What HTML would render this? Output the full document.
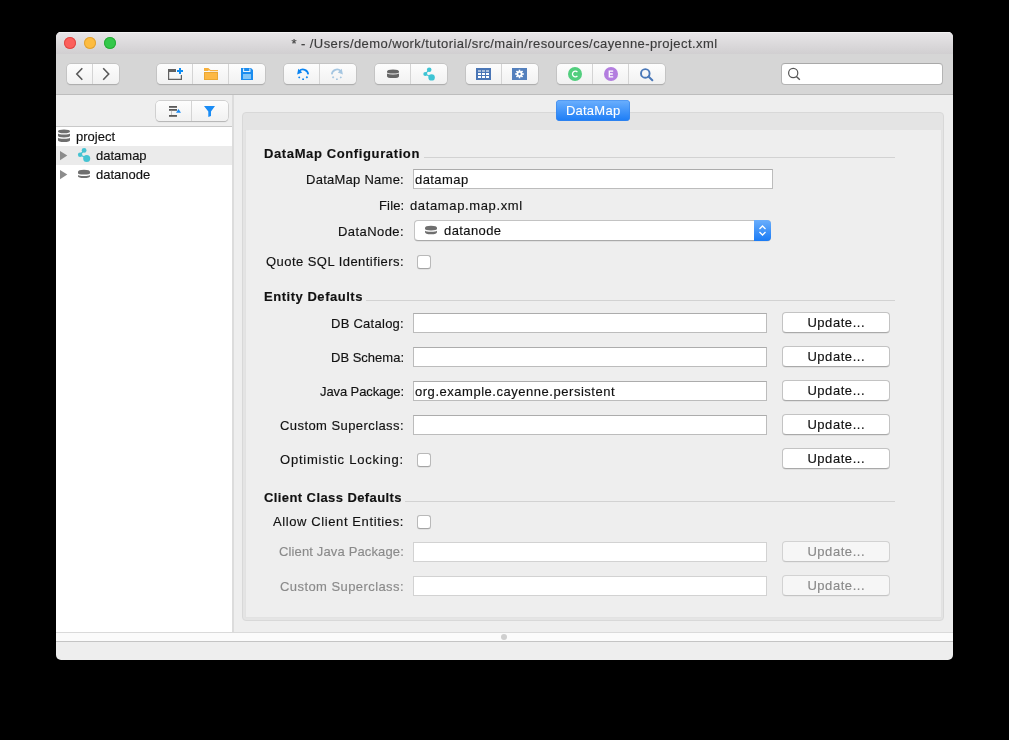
<!DOCTYPE html>
<html><head><meta charset="utf-8">
<style>
*{box-sizing:border-box;margin:0;padding:0}
.lbl,.btn,#title .t{will-change:transform}
html,body{width:1009px;height:740px;background:#000;overflow:hidden;font-family:"Liberation Sans",sans-serif;font-size:13px;color:#222}
.a{position:absolute}
#win{position:absolute;left:56px;top:32px;width:897px;height:628px;background:#eeeeee;border-radius:5px;overflow:hidden}
#title{position:absolute;left:0;top:0;width:897px;height:22px;background:linear-gradient(#e8e6e8,#d1cfd1);box-shadow:inset 0 1px 0 #f2f1f2}
#title .t{position:absolute;left:0;top:4px;width:897px;text-align:center;color:#3c3c3c;-webkit-text-stroke:0.15px #3c3c3c;font-size:13px;letter-spacing:0.42px;line-height:15px}
.light{position:absolute;top:5px;width:12px;height:12px;border-radius:50%}
#tb{position:absolute;left:0;top:22px;width:897px;height:41px;background:#d6d6d6;border-bottom:1px solid #bdbdbd}
.grp{position:absolute;top:10px;height:20px;border-radius:4px;background:linear-gradient(#fdfdfd,#f1f1f1);box-shadow:0 0 0 0.5px #b8b8b8,0 0.5px 1px rgba(0,0,0,0.25)}
.sep{position:absolute;top:0;width:1px;height:20px;background:#d4d4d4}
.ic{position:absolute}
.lbl{position:absolute;line-height:15px;white-space:nowrap;color:#111;-webkit-text-stroke:0.15px #111}
.r{text-align:right}
.b{font-weight:bold}
.fld{position:absolute;background:#fff;border:1px solid #bcbcbc;border-top-color:#acacac}
.fld.dis{border-color:#d2d2d2}
.btn{position:absolute;width:108px;height:21px;border-radius:4px;background:#fff;border:1px solid #c3c3c3;border-bottom-color:#a9a9a9;box-shadow:0 0.5px 0.5px rgba(0,0,0,0.12);text-align:center;line-height:20px;color:#111;-webkit-text-stroke:0.15px #111;letter-spacing:0.55px;text-indent:0.55px}
.btn.dis{background:#f6f6f6;color:#8a8a8a;-webkit-text-stroke:0.15px #8a8a8a;border-color:#d2d2d2;border-bottom-color:#c4c4c4;box-shadow:0 0.5px 0.5px rgba(0,0,0,0.06)}
.chk{position:absolute;width:14px;height:14px;border-radius:3px;background:#fff;border:1px solid #b9b9b9;border-bottom-color:#a5a5a5;box-shadow:0 0.5px 0.5px rgba(0,0,0,0.12)}
.hsep{position:absolute;height:1px;background:#d2d2d2}
.lbl.dis-l{color:#8a8a8a;-webkit-text-stroke:0.15px #8a8a8a}
</style></head><body>
<div id="win">
  <div id="title">
    <div class="light" style="left:8px;background:#fc605c;box-shadow:inset 0 0 0 1px #e04a46"></div>
    <div class="light" style="left:28px;background:#fdbc40;box-shadow:inset 0 0 0 1px #e0a236"></div>
    <div class="light" style="left:48px;background:#34c84a;box-shadow:inset 0 0 0 1px #2aac38"></div>
    <div class="t">* - /Users/demo/work/tutorial/src/main/resources/cayenne-project.xml</div>
  </div>
  <div id="tb">
    <!-- back/forward -->
    <div class="grp" style="left:11px;width:52px">
      <div class="sep" style="left:25px"></div>
      <svg class="ic" style="left:8px;top:3px" width="10" height="14"><path d="M7.3 1.2 L1.8 7 L7.3 12.8" fill="none" stroke="#595959" stroke-width="1.6"/></svg>
      <svg class="ic" style="left:34px;top:3px" width="10" height="14"><path d="M2.2 1.2 L7.7 7 L2.2 12.8" fill="none" stroke="#595959" stroke-width="1.6"/></svg>
    </div>
    <!-- new/open/save -->
    <div class="grp" style="left:101px;width:108px">
      <div class="sep" style="left:35px"></div><div class="sep" style="left:71px"></div>
    </div>
    <!-- undo/redo -->
    <div class="grp" style="left:228px;width:72px">
      <div class="sep" style="left:35px"></div>
    </div>
    <!-- db / datamap -->
    <div class="grp" style="left:319px;width:72px">
      <div class="sep" style="left:35px"></div>
    </div>
    <!-- grid / gear -->
    <div class="grp" style="left:410px;width:72px">
      <div class="sep" style="left:35px"></div>
    </div>
    <!-- C E search -->
    <div class="grp" style="left:501px;width:108px">
      <div class="sep" style="left:35px"></div><div class="sep" style="left:71px"></div>
    </div>
    <!-- search field -->
    <div class="a" style="left:725px;top:9px;width:162px;height:22px;background:#fff;border-radius:4px;border:1px solid #b4b4b4;border-top-color:#a9a9a9"></div>
  </div>

  <!-- sidebar -->
  <div class="a" style="left:0;top:63px;width:176px;height:32px;background:#eeeeee;border-bottom:1px solid #c9c9c9"></div>
  <div class="grp" style="left:100px;top:69px;width:72px;height:20px">
    <div class="sep" style="left:35px;height:20px"></div>
  </div>
  <div class="a" style="left:0;top:95px;width:176px;height:505px;background:#fff"></div>
  <div class="a" style="left:176px;top:63px;width:2px;height:537px;background:#dcdcdc"></div>
  <div class="a" style="left:0;top:114px;width:176px;height:19px;background:#ebebeb"></div>
  <div class="lbl" style="left:20px;top:97px">project</div>
  <div class="lbl" style="left:40px;top:116px">datamap</div>
  <div class="lbl" style="left:40px;top:135px">datanode</div>
  <svg class="ic" style="left:4px;top:119px" width="9" height="10"><path d="M0 0 L7.3 4.6 L0 9.2Z" fill="#8c8c8c"/></svg>
  <svg class="ic" style="left:4px;top:138px" width="9" height="10"><path d="M0 0 L7.3 4.6 L0 9.2Z" fill="#8c8c8c"/></svg>

  <!-- split bottom -->
  <div class="a" style="left:0;top:600px;width:897px;height:1px;background:#dadada"></div>
  <div class="a" style="left:0;top:601px;width:897px;height:8px;background:#fbfbfb"></div>
  <div class="a" style="left:0;top:609px;width:897px;height:1px;background:#c4c4c4"></div>
  <div class="a" style="left:445px;top:602px;width:6px;height:6px;border-radius:50%;background:#cfcfcf"></div>

  <!-- tabbed pane -->
  <div class="a" style="left:186px;top:80px;width:702px;height:509px;background:#e4e4e4;border:1px solid #d8d8d8;border-radius:4px"></div>
  <div class="a" style="left:189px;top:98px;width:697px;height:488px;background:#eeeeee;border:1px solid #e2e2e2;border-top:none"></div>
  <div class="a" style="left:500px;top:68px;width:74px;height:21px;border-radius:4px;background:linear-gradient(#6cb0fd,#1b7cf6);box-shadow:inset 0 0 0 0.6px #3a86ea;color:#fff;text-align:center;line-height:21px;letter-spacing:0.25px;text-indent:0.25px;will-change:transform;-webkit-text-stroke:0.1px #fff">DataMap</div>
</div>
<div id="form" class="a" style="left:0;top:0;width:1009px;height:740px">
<div class="hsep" style="left:423.5px;top:157px;width:471.5px"></div>
<div class="hsep" style="left:365.5px;top:300px;width:529.5px"></div>
<div class="hsep" style="left:405px;top:501px;width:490px"></div>
<div class="lbl b" style="top:146.0px;letter-spacing:0.619px;left:264.3px;">DataMap Configuration</div>
<div class="lbl" style="top:172.0px;letter-spacing:0.257px;right:604.7px;">DataMap Name:</div>
<div class="lbl" style="top:198.0px;letter-spacing:0.167px;right:604.7px;">File:</div>
<div class="lbl" style="top:224.0px;letter-spacing:0.427px;right:604.7px;">DataNode:</div>
<div class="lbl" style="top:253.8px;letter-spacing:0.448px;right:604.7px;">Quote SQL Identifiers:</div>
<div class="lbl b" style="top:288.8px;letter-spacing:0.532px;left:263.8px;">Entity Defaults</div>
<div class="lbl" style="top:315.8px;letter-spacing:0.264px;right:604.7px;">DB Catalog:</div>
<div class="lbl" style="top:349.8px;letter-spacing:0.002px;right:604.7px;">DB Schema:</div>
<div class="lbl" style="top:383.8px;letter-spacing:-0.099px;right:604.7px;">Java Package:</div>
<div class="lbl" style="top:417.8px;letter-spacing:0.426px;right:604.7px;">Custom Superclass:</div>
<div class="lbl" style="top:451.8px;letter-spacing:0.785px;right:604.7px;">Optimistic Locking:</div>
<div class="lbl b" style="top:490.0px;letter-spacing:0.413px;left:263.8px;">Client Class Defaults</div>
<div class="lbl" style="top:513.7px;letter-spacing:0.601px;right:604.7px;">Allow Client Entities:</div>
<div class="lbl dis-l" style="top:544.4px;letter-spacing:0.144px;right:604.7px;">Client Java Package:</div>
<div class="lbl dis-l" style="top:578.6px;letter-spacing:0.426px;right:604.7px;">Custom Superclass:</div>
<div class="lbl" style="top:198.0px;letter-spacing:0.631px;left:410.0px;">datamap.map.xml</div>

<div class="fld" style="left:413px;top:169px;width:360px;height:20px"></div>
<div class="lbl" style="left:414.5px;top:172px;letter-spacing:0.43px">datamap</div>
<div class="a" style="left:414px;top:220px;width:357px;height:21px;border-radius:4px;background:#fff;border:1px solid #c3c3c3;border-bottom-color:#a9a9a9;box-shadow:0 0.5px 0.5px rgba(0,0,0,0.12)">
  <div class="a" style="left:339px;top:-1px;width:17px;height:21px;background:linear-gradient(#6aaefc,#1a7bf5);border-radius:0 4px 4px 0"></div>
  <svg class="a" style="left:342px;top:2px" width="11" height="15"><path d="M2.5 6 L5.5 3 L8.5 6 M2.5 9 L5.5 12 L8.5 9" fill="none" stroke="#fff" stroke-width="1.3"/></svg>
</div>
<div class="lbl" style="left:443.5px;top:223px;letter-spacing:0.4px">datanode</div>
<div class="chk" style="left:417px;top:255px"></div>

<div class="fld" style="left:413px;top:313px;width:354px;height:20px"></div>
<div class="fld" style="left:413px;top:347px;width:354px;height:20px"></div>
<div class="fld" style="left:413px;top:381px;width:354px;height:20px"></div>
<div class="lbl" style="left:414.5px;top:383.6px;letter-spacing:0.53px">org.example.cayenne.persistent</div>
<div class="fld" style="left:413px;top:415px;width:354px;height:20px"></div>
<div class="chk" style="left:417px;top:453px"></div>
<div class="btn" style="left:782px;top:312px">Update...</div>
<div class="btn" style="left:782px;top:346px">Update...</div>
<div class="btn" style="left:782px;top:380px">Update...</div>
<div class="btn" style="left:782px;top:414px">Update...</div>
<div class="btn" style="left:782px;top:448px">Update...</div>

<div class="chk" style="left:417px;top:515px"></div>
<div class="fld dis" style="left:413px;top:542px;width:354px;height:20px"></div>
<div class="fld dis" style="left:413px;top:576px;width:354px;height:20px"></div>
<div class="btn dis" style="left:782px;top:541px">Update...</div>
<div class="btn dis" style="left:782px;top:575px">Update...</div>

<!-- toolbar icons (abs coords) -->
<svg class="a" style="left:166px;top:66px" width="20" height="16" viewBox="166 66 20 16">
  <rect x="168" y="69" width="8" height="3" fill="#616161"/>
  <path d="M168.6 71 V79.4 H181.4 V75" fill="#fff" fill-opacity="0" stroke="#616161" stroke-width="1.2"/>
  <path d="M177 70.9 H183 M180 67.9 V73.9" stroke="#0a8cf5" stroke-width="2"/>
</svg>
<svg class="a" style="left:202px;top:66px" width="18" height="16" viewBox="202 66 18 16">
  <path d="M204 68 H208.3 L210.6 70 H218 V71.2 H210.2 L208.6 69.8 V71 H204 Z" fill="#f7b03c"/>
  <rect x="204.5" y="72.5" width="13" height="7" fill="#fdb843" stroke="#eaa733" stroke-width="1"/>
</svg>
<svg class="a" style="left:239px;top:66px" width="16" height="16" viewBox="239 66 16 16">
  <path d="M241 68 H251 L253 70 V80 H241 Z" fill="#1b8cef"/>
  <path d="M243.6 68.5 V71.5 H249.9 V68.5" fill="none" stroke="#e4f2fd" stroke-width="1.1"/>
  <rect x="248" y="68.5" width="1" height="2" fill="#1b8cef"/>
  <rect x="243" y="74" width="8" height="5" fill="#82c5f7"/>
</svg>
<svg class="a" style="left:294px;top:66px" width="18" height="16" viewBox="294 66 18 16">
  <path d="M299.2 71.2 A5.2 5.2 0 0 1 308.2 74.4" fill="none" stroke="#0a84f2" stroke-width="1.7"/>
  <path d="M298.3 68.8 L297.1 74.6 L302.2 72.6 Z" fill="#0a84f2"/>
  <path d="M298.6 76.9 L299.8 78 M302.2 79.3 H304 M306.3 77.9 L307.5 76.6" stroke="#0a84f2" stroke-width="1.6"/>
</svg>
<svg class="a" style="left:329px;top:66px" width="18" height="16" viewBox="329 66 18 16"><g transform="translate(640,0) scale(-1,1)">
  <path d="M299.2 71.2 A5.2 5.2 0 0 1 308.2 74.4" fill="none" stroke="#a5c6e1" stroke-width="1.7"/>
  <path d="M298.3 68.8 L297.1 74.6 L302.2 72.6 Z" fill="#a5c6e1"/>
  <path d="M298.6 76.9 L299.8 78 M302.2 79.3 H304 M306.3 77.9 L307.5 76.6" stroke="#a5c6e1" stroke-width="1.6"/></g>
</svg>
<svg class="a" style="left:385px;top:67px" width="16" height="14" viewBox="385 67 16 14">
  <path d="M387 71.6 Q387 69.5 393 69.5 Q399 69.5 399 71.6 V72.2 Q399 73.6 393 73.6 Q387 73.6 387 72.2 Z" fill="#666"/>
  <path d="M387 73.6 Q388.5 74.6 393 74.6 Q397.5 74.6 399 73.6 V76.2 Q399 78.1 393 78.1 Q387 78.1 387 76.2 Z" fill="#666"/>
</svg>
<svg class="a" style="left:421px;top:66px" width="16" height="16" viewBox="421 66 16 16">
  <path d="M429.1 69.8 L425.3 73.9 L431.5 77.4" fill="none" stroke="#3ec4d4" stroke-width="1.1"/>
  <circle cx="429.2" cy="69.8" r="2.3" fill="#3ec4d4"/>
  <circle cx="425.3" cy="73.9" r="2.0" fill="#3ec4d4"/>
  <circle cx="431.6" cy="77.4" r="3.2" fill="#3ec4d4"/>
</svg>
<svg class="a" style="left:474px;top:66px" width="20" height="16" viewBox="474 66 20 16">
  <rect x="476" y="68" width="15" height="12" fill="#4a76b6"/>
  <g fill="#fff">
   <rect x="478" y="73" width="3" height="2"/><rect x="482" y="73" width="3" height="2"/><rect x="486" y="73" width="3" height="2"/>
   <rect x="478" y="76" width="3" height="2"/><rect x="482" y="76" width="3" height="2"/><rect x="486" y="76" width="3" height="2"/>
  </g>
  <g fill="#a9bedb">
   <rect x="478" y="70" width="3" height="2"/><rect x="482" y="70" width="3" height="2"/><rect x="486" y="70" width="3" height="2"/>
  </g>
</svg>
<svg class="a" style="left:510px;top:66px" width="20" height="16" viewBox="510 66 20 16">
  <rect x="512" y="68" width="15" height="12" fill="#5480bd"/>
  <g fill="#fff" transform="translate(519.5 74)">
    <circle r="2.9"/>
    <rect x="-0.8" y="-4.3" width="1.6" height="8.6"/>
    <rect x="-0.8" y="-4.3" width="1.6" height="8.6" transform="rotate(45)"/>
    <rect x="-0.8" y="-4.3" width="1.6" height="8.6" transform="rotate(90)"/>
    <rect x="-0.8" y="-4.3" width="1.6" height="8.6" transform="rotate(135)"/>
  </g>
  <circle cx="519.5" cy="74" r="1.2" fill="#5480bd"/>
</svg>
<svg class="a" style="left:566px;top:66px" width="18" height="17" viewBox="566 66 18 17">
  <circle cx="575" cy="74" r="7" fill="#52ce7e"/>
  <path d="M577.4 72.2 A2.8 2.8 0 1 0 577.4 75.8" fill="none" stroke="#fff" stroke-width="1.3"/>
</svg>
<svg class="a" style="left:602px;top:66px" width="18" height="17" viewBox="602 66 18 17">
  <circle cx="611" cy="74" r="7" fill="#b37ddf"/>
  <path d="M613.2 71.2 H609.3 V76.8 H613.2 M609.3 74 H612.8" fill="none" stroke="#fff" stroke-width="1.3"/>
</svg>
<svg class="a" style="left:637px;top:66px" width="18" height="17" viewBox="637 66 18 17">
  <circle cx="645.3" cy="73.4" r="4.3" fill="none" stroke="#4a78b8" stroke-width="1.9"/>
  <path d="M648.5 76.6 L652.3 80.2" stroke="#4a78b8" stroke-width="2.1" stroke-linecap="round"/>
</svg>
<svg class="a" style="left:785px;top:66px" width="18" height="17" viewBox="785 66 18 17">
  <circle cx="793.2" cy="73" r="4.6" fill="none" stroke="#555" stroke-width="1.2"/>
  <path d="M796.4 76.4 L799.8 79.8" stroke="#555" stroke-width="1.4"/>
</svg>
<!-- sidebar header icons -->
<svg class="a" style="left:167px;top:104px" width="16" height="15" viewBox="167 104 16 15">
  <g fill="#5a5a5a">
  <rect x="169" y="106" width="8" height="1.8"/>
  <rect x="169" y="109" width="8" height="1.8"/>
  <rect x="171.2" y="110.5" width="0.6" height="4.5" fill="#a0a0a0"/>
  <rect x="169" y="115" width="8" height="1.8"/>
  </g>
  <path d="M176 112.8 L181 112.8 L178.5 109 Z" fill="#1a8cf5"/>
</svg>
<svg class="a" style="left:202px;top:104px" width="16" height="15" viewBox="202 104 16 15">
  <path d="M204 106 H215 L211 111.5 V116 L208.3 117 V111.5 Z" fill="#1a8cf5"/>
</svg>
<!-- tree icons -->
<svg class="a" style="left:56px;top:127px" width="16" height="17" viewBox="56 127 16 17">
  <g fill="#6f6f6f">
  <path d="M58 131.5 Q58 129.6 64 129.6 Q70 129.6 70 131.5 Q70 133.3 64 133.3 Q58 133.3 58 131.5Z"/>
  <path d="M58 133.4 Q59 134.4 64 134.4 Q69 134.4 70 133.4 V135.8 Q70 137.5 64 137.5 Q58 137.5 58 135.8Z"/>
  <path d="M58 137.8 Q59 138.8 64 138.8 Q69 138.8 70 137.8 V140.2 Q70 142 64 142 Q58 142 58 140.2Z"/>
  </g>
</svg>
<svg class="a" style="left:76px;top:146px" width="16" height="18" viewBox="76 146 16 18">
  <path d="M84.1 150.4 L80.1 154.7 L86.7 158.4" fill="none" stroke="#45c3d2" stroke-width="1.3"/>
  <circle cx="84.1" cy="150.4" r="2.4" fill="#45c3d2"/>
  <circle cx="80.1" cy="154.7" r="2.2" fill="#45c3d2"/>
  <circle cx="86.7" cy="158.4" r="3.5" fill="#45c3d2"/>
</svg>
<svg class="a" style="left:76px;top:167px" width="16" height="13" viewBox="76 167 16 13">
  <g fill="#6f6f6f">
  <path d="M78 172 Q78 169.8 84 169.8 Q90 169.8 90 172 V173.2 Q90 174.6 84 174.6 Q78 174.6 78 173.2Z"/>
  <path d="M78 174.9 Q79 175.9 84 175.9 Q89 175.9 90 174.9 V176.2 Q90 178 84 178 Q78 178 78 176.2Z"/>
  </g>
</svg>
<svg class="a" style="left:423px;top:224px" width="16" height="12" viewBox="423 224 16 12">
  <g fill="#6f6f6f">
  <path d="M425 227.8 Q425 225.7 431 225.7 Q437 225.7 437 227.8 V229 Q437 230.4 431 230.4 Q425 230.4 425 229Z"/>
  <path d="M425 230.7 Q426 231.7 431 231.7 Q436 231.7 437 230.7 V232 Q437 234.3 431 234.3 Q425 234.3 425 232Z"/>
  </g>
</svg>
</div>
</body></html>
